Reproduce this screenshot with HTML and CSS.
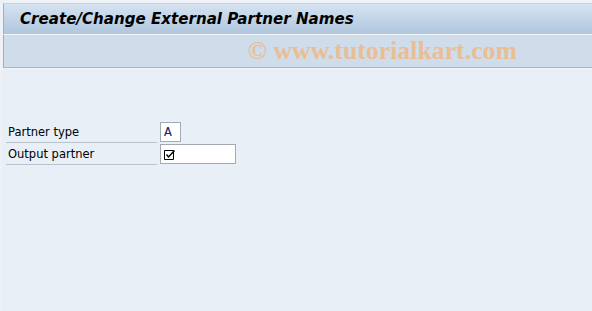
FILE: index.html
```html
<!DOCTYPE html>
<html>
<head>
<meta charset="utf-8">
<link rel="stylesheet" href="styles.css">
</head>
<body>
<div class="screen">
  <div class="titlebar"><h1 class="title">Create/Change External Partner Names</h1></div>
  <div class="toolbar"><span class="watermark">© www.tutorialkart.com</span></div>
  <div class="main">
    <div class="form">
      <div class="row">
        <div class="label">Partner type</div>
        <div class="field field-short"><span class="val">A</span></div>
      </div>
      <div class="row">
        <div class="label">Output partner</div>
        <div class="field field-long">
          <svg class="check" width="12" height="11" viewBox="0 0 12 11">
            <path d="M0.5 1.5H9.5V10.5H0.5Z" fill="none" stroke="#000" stroke-width="1"/>
            <path d="M2.5 5.5L4.5 8L10.5 1.5" fill="none" stroke="#000" stroke-width="1.4"/>
          </svg>
        </div>
      </div>
    </div>
  </div>
</div>
</body>
</html>
```

FILE: styles.css
```css
html, body {
  margin: 0;
  padding: 0;
  background: #eef2f6;
  width: 592px;
  height: 311px;
  overflow: hidden;
}

.screen {
  display: flex;
  flex-direction: column;
  height: 311px;
  padding-top: 3px;
  box-sizing: border-box;
}

.titlebar {
  margin-left: 3px;
  height: 31px;
  box-sizing: border-box;
  border-top: 1px solid #c9d3de;
  border-left: 1px solid #9fb0c2;
  background: linear-gradient(#d6e3f0, #afc6de);
  display: flex;
  align-items: center;
  padding-left: 16px;
}

.title {
  margin: 0;
  font-family: "DejaVu Sans", sans-serif;
  font-weight: bold;
  font-style: italic;
  font-size: 15.1px;
  color: #000;
}

.toolbar {
  margin-left: 3px;
  height: 34px;
  box-sizing: border-box;
  border-top: 1px solid #f4f7fa;
  border-left: 1px solid #9fb0c2;
  border-bottom: 1px solid #a9b8c8;
  background: #cfdce9;
  display: flex;
  align-items: center;
  justify-content: flex-end;
  padding-right: 75px;
}

.watermark {
  font-family: "Liberation Serif", serif;
  font-weight: bold;
  font-size: 25.8px;
  line-height: 28px;
  color: #eebb8c;
  opacity: 0.9;
}

.main {
  flex: 1;
  margin-top: 2px;
  margin-left: 2px;
  background: #e9eff7;
  padding-top: 52px;
  padding-left: 4px;
}

.form {
  display: flex;
  flex-direction: column;
  gap: 1px;
}

.row {
  display: flex;
  align-items: flex-end;
  height: 21px;
}

.label {
  width: 151px;
  height: 21px;
  box-sizing: border-box;
  border-bottom: 1px solid #b9c3cc;
  padding-left: 2px;
  font-family: "DejaVu Sans", sans-serif;
  font-size: 11.5px;
  line-height: 20px;
  color: #000;
}

.field {
  margin-left: 3px;
  height: 20px;
  box-sizing: border-box;
  border: 1px solid #a3aab2;
  background: #fff;
  display: flex;
  align-items: center;
  padding-left: 3px;
  margin-bottom: 1px;
}

.field-short { width: 21px; }
.field-long { width: 76px; }

.val {
  font-family: "Liberation Mono", monospace;
  font-size: 13px;
  color: #1c2260;
}

.check { display: block; }
```
